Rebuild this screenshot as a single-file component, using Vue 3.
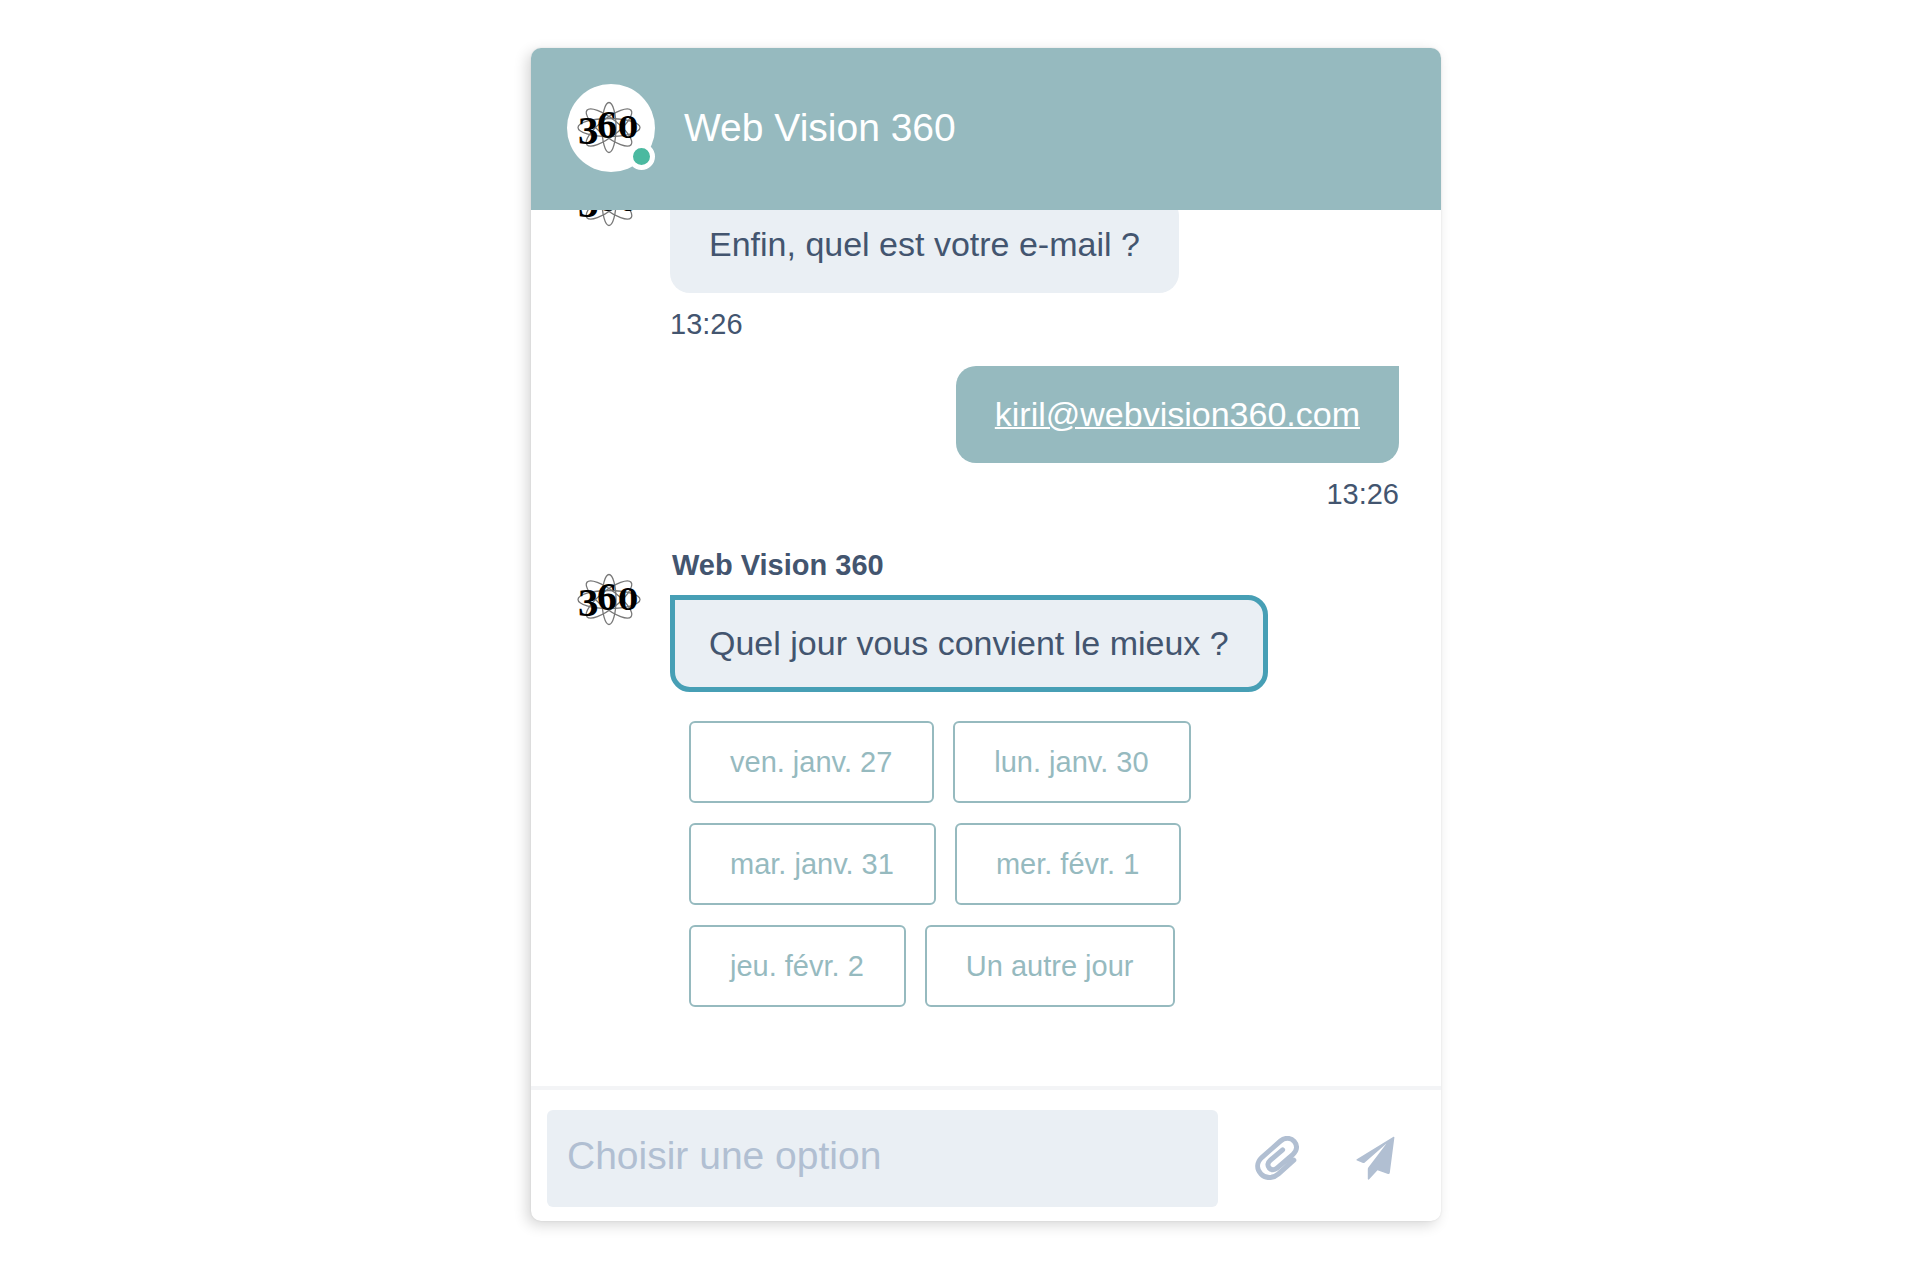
<script setup>
import { ref, h } from 'vue'

const draft = ref('')
const days = [
  ['ven. janv. 27', 'lun. janv. 30'],
  ['mar. janv. 31', 'mer. févr. 1'],
  ['jeu. févr. 2', 'Un autre jour'],
]

// Brand mark: four electron orbits behind old-style numerals.
const orbits = [
  { rx: 31, ry: 9, angle: 0 },
  { rx: 25, ry: 7, angle: 90 },
  { rx: 28, ry: 9, angle: 38 },
  { rx: 28, ry: 9, angle: -38 },
]
const digits = [
  { char: '3', x: 11, y: 60, size: 41, family: "'Liberation Serif', serif" },
  { char: '6', x: 30, y: 54, size: 40, family: "'Liberation Serif', serif" },
  { char: '0', x: 51, y: 54, size: 29, family: "'DejaVu Serif', serif" },
]
const BrandMark = () =>
  h('svg', { viewBox: '0 0 88 88' }, [
    h('g', { fill: 'none', stroke: '#777', 'stroke-width': 1.3 },
      orbits.map((o) => h('ellipse', {
        cx: 42, cy: 43.5, rx: o.rx, ry: o.ry, transform: `rotate(${o.angle} 42 43.5)`,
      }))),
    h('g', { fill: '#000', 'font-weight': 700 },
      digits.map((d) => h('text', {
        x: d.x, y: d.y, 'font-size': d.size, 'font-family': d.family,
      }, d.char))),
  ])
</script>

<template>
  <div class="page">
    <main class="chat">
      <header class="chat-header">
        <div class="portrait">
          <BrandMark class="avatar" />
          <span class="status"></span>
        </div>
        <h1>Web Vision 360</h1>
      </header>

      <section class="messages">
        <article class="message">
          <BrandMark class="avatar" />
          <p class="bubble">Enfin, quel est votre e-mail ?</p>
          <time>13:26</time>
        </article>

        <article class="message own">
          <p class="bubble"><a href="mailto:kiril@webvision360.com">kiril@webvision360.com</a></p>
          <time>13:26</time>
        </article>

        <article class="message">
          <BrandMark class="avatar" />
          <h2>Web Vision 360</h2>
          <p class="bubble active">Quel jour vous convient le mieux ?</p>
          <div class="options">
            <div v-for="(row, i) in days" :key="i" class="option-row">
              <button v-for="day in row" :key="day" type="button">{{ day }}</button>
            </div>
          </div>
        </article>
      </section>

      <form class="composer" @submit.prevent>
        <input v-model="draft" type="text" placeholder="Choisir une option" aria-label="Choisir une option" />
        <button type="button" aria-label="Joindre un fichier">
          <svg width="44" height="44" viewBox="0 0 44 44">
            <path class="clip" d="M38.8 24.2 L23.5 37.8 C17.5 43 10.5 42.6 6 38 C1.3 33 1.6 26.4 7 21.3 L25.5 5 C30 1.2 35.8 1.6 39.2 5.4 C42.6 9.2 42.3 14.6 38 18.4 L22 32.2 C19.4 34.4 16.2 34.2 14.2 32 C12.2 29.6 12.6 26.6 15.2 24.3 L27.6 13.8" />
          </svg>
        </button>
        <button type="submit" aria-label="Envoyer">
          <svg width="44" height="44" viewBox="0 0 44 44">
            <path class="plane" d="M40.5 0.8 L3.8 23.3 Q3 24 4 24.5 L10 27 Q11 27.3 11.8 26.5 L33.5 7.5 L15.3 31.5 Q14.8 32.3 14.8 33 L14.8 43 Q15.2 44.2 16.2 43.3 L24.5 34.3 L35 38 Q36.6 38.3 36.8 36.8 L41.4 1.6 Q41.4 0.4 40.5 0.8 Z" />
          </svg>
        </button>
      </form>
    </main>
  </div>
</template>

<style>
body {
  margin: 0;
  background: #fff;
}
</style>

<style scoped>
.page {
  box-sizing: border-box;
  height: 100vh;
  padding: 48px 0 59px 52px;
  display: flex;
  justify-content: center;
  font-family: "Liberation Sans", Arial, sans-serif;
  color: #43556f;
}
.chat {
  width: 100%;
  max-width: 910px;
  display: flex;
  flex-direction: column;
  border-radius: 10px;
  background: #fff;
  box-shadow: -4px 4px 14px rgba(0, 0, 0, 0.16), 0 0 2px rgba(0, 0, 0, 0.1);
  overflow: hidden;
}
.chat-header {
  flex: none;
  display: flex;
  align-items: center;
  gap: 29px;
  padding: 36px 36px 38px;
  background: #96babf;
}
.portrait {
  position: relative;
  height: 88px;
  border-radius: 50%;
  background: #fff;
}
.avatar {
  display: block;
  width: 88px;
  height: 88px;
}
.status {
  position: absolute;
  right: 0;
  bottom: 2px;
  width: 17px;
  height: 17px;
  border: 5px solid #fff;
  border-radius: 50%;
  background: #4bb9a0;
}
h1 {
  margin: 0;
  font-size: 39px;
  line-height: 44px;
  font-weight: 400;
  color: #fff;
}
.messages {
  flex: 1;
  min-height: 0;
  display: flex;
  flex-direction: column;
  justify-content: flex-end;
  gap: 25px;
  padding: 0 42px 79px 36px;
  overflow: hidden;
}
.message {
  flex: none;
  display: grid;
  grid-template-columns: 103px 1fr;
  grid-template-rows: 47px auto auto;
  justify-items: start;
}
.message > * {
  grid-column: 2;
}
.message > .avatar {
  grid-area: 1 / 1 / 3 / 2;
  margin-top: 8px;
}
.message.own {
  grid-template-rows: auto;
  justify-items: end;
  padding-bottom: 12px;
}
h2 {
  margin: 0 2px;
  font-size: 29px;
  line-height: 34px;
  font-weight: 700;
}
.bubble {
  box-sizing: border-box;
  grid-row: 2;
  margin: 0;
  padding: 29px 39px;
  border-radius: 0 20px 20px 20px;
  background: #eaeff4;
  font-size: 34px;
  line-height: 39px;
}
.own .bubble {
  grid-row: 1;
  border-radius: 20px 0 20px 20px;
  background: #96babf;
}
.bubble a {
  color: #fff;
  text-decoration-thickness: 2px;
}
.bubble.active {
  padding: 24px 34px;
  border: 5px solid #479fb5;
}
time {
  grid-row: 3;
  margin-top: 14px;
  font-size: 29px;
  line-height: 34px;
}
.own time {
  grid-row: 2;
}
.options {
  display: flex;
  flex-direction: column;
  gap: 20px;
  margin: 29px 0 0 19px;
}
.option-row {
  display: flex;
  gap: 19px;
}
.option-row button {
  height: 82px;
  padding: 0 40px 0 39px;
  border: 2px solid #96babf;
  border-radius: 6px;
  background: #fff;
  font: inherit;
  font-size: 29px;
  color: #96babf;
}
.composer {
  flex: none;
  display: flex;
  align-items: center;
  padding: 20px 24px 14px 16px;
  border-top: 4px solid #f3f4f6;
}
.composer input {
  box-sizing: border-box;
  flex: 1;
  min-width: 0;
  height: 97px;
  margin-right: 17px;
  padding: 0 20px 5px;
  border: 0;
  border-radius: 6px;
  background: #eaeff4;
  font: inherit;
  font-size: 39px;
  color: #43556f;
}
.composer input::placeholder {
  color: #b1bfd2;
  opacity: 1;
}
.composer button {
  display: flex;
  justify-content: center;
  width: 84px;
  margin: 0 0 2px;
  padding: 0;
  border: 0;
  background: none;
}
.composer button + button {
  margin-left: 14px;
}
.plane {
  fill: #b1bfd2;
}
.clip {
  fill: none;
  stroke: #b1bfd2;
  stroke-width: 5px;
  stroke-linecap: round;
}
</style>
